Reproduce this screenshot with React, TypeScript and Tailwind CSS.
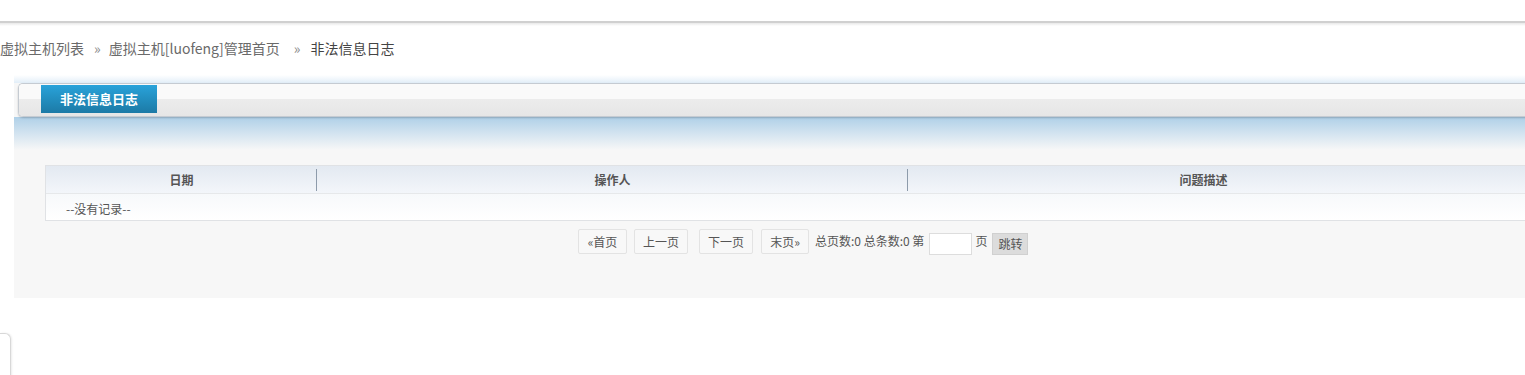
import React from 'react'

const cjk = { fontFamily: '"Microsoft YaHei", "Noto Sans CJK SC", "Noto Sans", sans-serif' }

function PageBtn({ label, w }: { label: string; w: string }) {
    return (
        <button className={`h-[25px] ${w} border border-[#e3e3e3] bg-[#f8f8f8] text-[12px] text-[#555] rounded-[2px]`}>
            {label}
        </button>
    )
}

export default function App() {
    return (
        <div className="w-[1525px] h-[375px] overflow-hidden bg-white relative" style={cjk}>
            {/* top bar */}
            <div className="h-[21px] bg-white"></div>
            <div className="h-[2px] bg-[#d0d0d0]"></div>
            <div className="h-[3px] bg-gradient-to-b from-[#e8e8e8] to-white"></div>

            {/* breadcrumb */}
            <div className="h-[49px] flex items-center text-[14px] text-[#6a6a6a] pb-[5px]">
                <span>虚拟主机列表</span>
                <span className="ml-[10px] mr-[8px] text-[#888]">»</span>
                <span>虚拟主机[luofeng]管理首页</span>
                <span className="ml-[14px] mr-[10px] text-[#888]">»</span>
                <span className="text-[#444]">非法信息日志</span>
            </div>

            {/* panel */}
            <div className="ml-[14px] w-[1530px] h-[223px] bg-[#f7f7f7]">
                <div className="h-[8px] bg-gradient-to-b from-white to-[#e2eef8]"></div>
                <div className="ml-[4px] h-[34px] rounded-l-[5px] border-t border-b border-l border-[#c5cbd2] shadow-[0_1px_2px_rgba(0,0,0,0.2)] flex flex-col relative overflow-hidden">
                    <div className="h-[15px] bg-[#fafafa]"></div>
                    <div className="flex-1 bg-gradient-to-b from-[#ececec] to-[#e6e6e6]"></div>
                    <div className="absolute left-[22px] top-[1px] w-[116px] h-[28px] bg-gradient-to-b from-[#29a3da] to-[#1c7aa6] flex items-center justify-center text-white font-bold text-[13px]">
                        非法信息日志
                    </div>
                </div>
                <div className="h-[33px] bg-gradient-to-b from-[#afd0e8] to-[#f7f7f7]"></div>

                {/* table */}
                <div className="mt-[15px] ml-[31px] border border-[#e0e2e5] text-[12px] text-[#555]">
                    <div className="flex h-[28px] bg-gradient-to-b from-[#e3e9f1] to-[#f3f6fa] border-b border-[#e6e8ea] font-bold">
                        <div className="w-[271px] flex items-center justify-center relative">
                            日期
                            <div className="absolute right-0 top-[3px] bottom-[2px] w-px bg-[#8d9bab]"></div>
                        </div>
                        <div className="w-[591px] flex items-center justify-center relative">
                            操作人
                            <div className="absolute right-0 top-[3px] bottom-[2px] w-px bg-[#8d9bab]"></div>
                        </div>
                        <div className="w-[591px] flex items-center justify-center">问题描述</div>
                    </div>
                    <div className="h-[26px] bg-gradient-to-b from-[#f7f9fb] to-white flex items-center pl-[20px] pt-[3px]">
                        --没有记录--
                    </div>
                </div>

                {/* pagination */}
                <div className="mt-[7px] flex items-center text-[12px] text-[#555]" style={{ paddingLeft: 564 }}>
                    <PageBtn label="«首页" w="w-[49px]" />
                    <div className="w-[7px]"></div>
                    <PageBtn label="上一页" w="w-[54px]" />
                    <div className="w-[11px]"></div>
                    <PageBtn label="下一页" w="w-[54px]" />
                    <div className="w-[8px]"></div>
                    <PageBtn label="末页»" w="w-[48px]" />
                    <span className="ml-[6px] mt-[-2px]">总页数:0 总条数:0 第</span>
                    <input className="ml-[5px] mt-[5px] w-[43px] h-[22px] border border-[#ddd] bg-white" />
                    <span className="ml-[3px] mt-[-2px]">页</span>
                    <button className="ml-[5px] mt-[5px] w-[36px] h-[22px] bg-[#dcdcdc] border border-[#d0d0d0] text-[12px] text-[#555]">跳转</button>
                </div>
            </div>

            {/* bottom-left corner */}
            <div className="mt-[35px] w-[11px] h-[50px] border-t border-r border-[#d8d8d8] rounded-tr-[6px] shadow-[1px_0_2px_rgba(0,0,0,0.08)]"></div>
        </div>
    )
}
